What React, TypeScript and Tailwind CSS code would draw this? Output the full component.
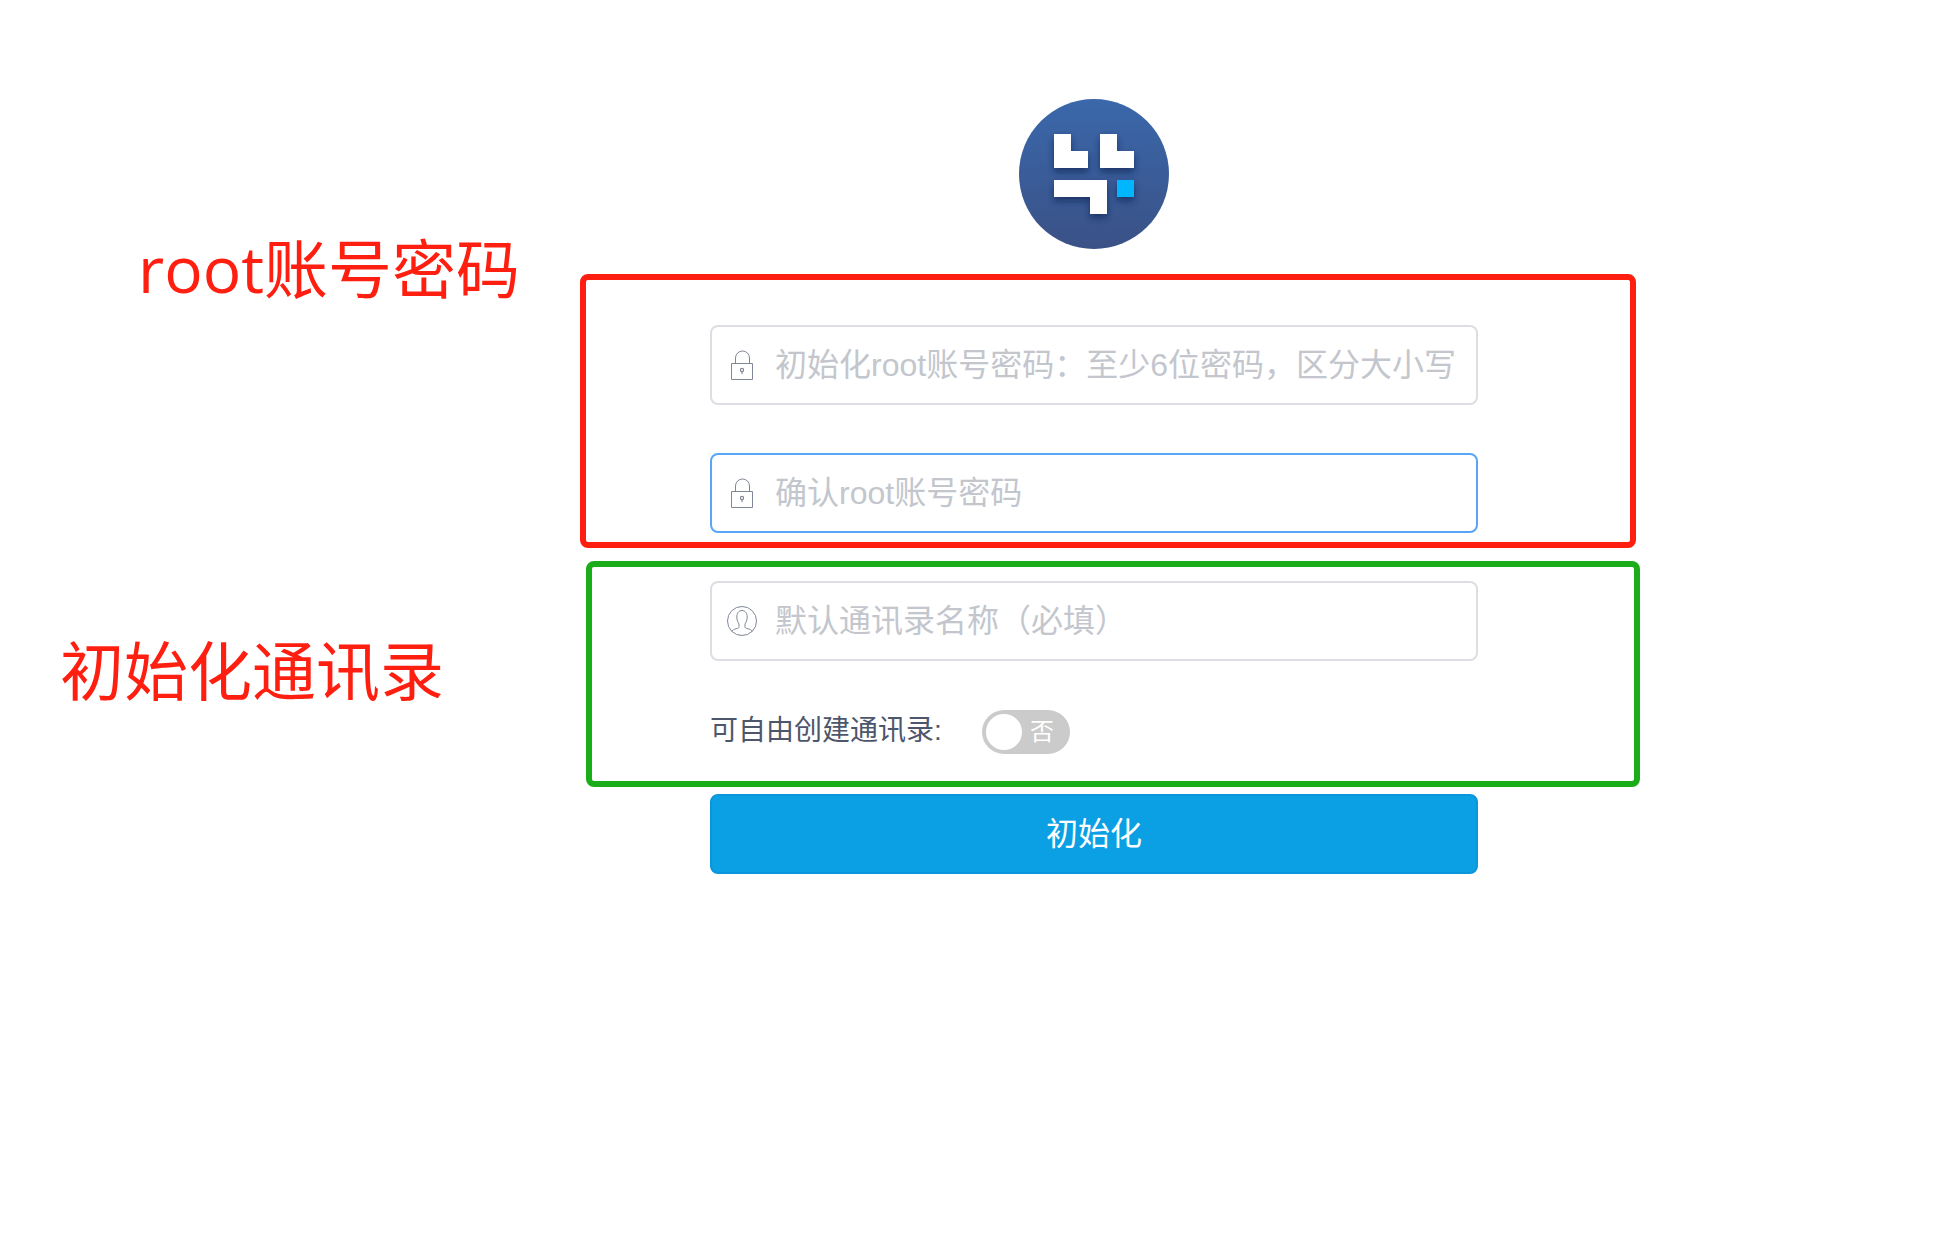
import type { ReactNode } from "react";

function Logo() {
  return (
    <svg viewBox="0 0 150 150" className="h-[150px] w-[150px]" role="img" aria-label="Logo">
      <defs>
        <linearGradient id="disc" x1="0" y1="0" x2="0" y2="1">
          <stop offset="0" stopColor="#3a68ab" />
          <stop offset="1" stopColor="#3a5186" />
        </linearGradient>
        <filter id="shade" x="-20%" y="-20%" width="140%" height="150%">
          <feDropShadow dx="0" dy="4" stdDeviation="3.5" floodColor="#0b2558" floodOpacity="0.75" />
        </filter>
      </defs>
      <circle cx="75" cy="75" r="75" fill="url(#disc)" />
      <g filter="url(#shade)">
        <path d="M35 35h17v17h17v17H35z" fill="#fff" />
        <path d="M81 35h17v17h17v17H81z" fill="#fff" />
        <path d="M35 81h53v34H71V98H35z" fill="#fff" />
        <path d="M98 81h17v17H98z" fill="#00b7ff" />
      </g>
    </svg>
  );
}

function LockIcon() {
  return (
    <svg viewBox="0 0 32 32" className="h-8 w-8" fill="none" stroke="#808798" aria-hidden="true">
      <path d="M5.5 14.5h21v16h-21z" />
      <path d="M9.5 14.5V9a7 7 0 0 1 14 0v5.5" />
      <circle cx="16" cy="21" r="1.6" strokeWidth="1.2" />
      <path d="M16 22.6V25" strokeWidth="1.2" />
    </svg>
  );
}

function PersonIcon() {
  return (
    <svg viewBox="0 0 32 32" className="h-8 w-8" fill="none" stroke="#808798" aria-hidden="true">
      <circle cx="16" cy="16" r="14.5" />
      <path d="M5.6 26.4c1-1.4 2.400-2.200 4.400-2.600 2.300-.4 3-.8 3-2.300v-2.500c-1.300-2-2.200-4.300-2.200-7 0-3.900 2-6.500 5.200-6.500s5.200 2.600 5.200 6.500c0 2.700-.9 5-2.200 7v2.500c0 1.500.7 1.900 3 2.300 2 .4 3.400 1.200 4.400 2.600" />
    </svg>
  );
}

type FieldProps = {
  icon: ReactNode;
  placeholder: string;
  type: "text" | "password";
  active?: boolean;
};

function Field({ icon, placeholder, type, active = false }: FieldProps) {
  return (
    <label
      className={`flex h-20 w-full items-center gap-[17px] rounded-lg border-2 bg-white pl-[14px] pr-3 ${
        active ? "border-[#58a6f5]" : "border-[#dcdee4]"
      }`}
    >
      {icon}
      <input
        type={type}
        aria-label={placeholder}
        placeholder={placeholder}
        className="h-full min-w-0 flex-1 bg-transparent text-[32px] text-[#4d566b] outline-none placeholder:text-[#c3c6cd]"
      />
    </label>
  );
}

export default function App() {
  return (
    <main className="flex min-h-screen bg-white pr-[316px] font-['Liberation_Sans','Noto_Sans_CJK_SC',sans-serif]">
      <aside className="w-[580px] shrink-0 whitespace-nowrap pt-[229px] font-['Open_Sans','Noto_Sans_CJK_SC',sans-serif] text-[64px] leading-[80px] text-[#ff1f10]">
        <p className="pl-[138px]">root账号密码</p>
        <p className="mt-[322px] pl-[60px]">初始化通讯录</p>
      </aside>

      <form className="min-w-0 flex-1 pt-[99px]" onSubmit={(e) => e.preventDefault()}>
        <div className="flex justify-center pl-[130px] pr-[163px]">
          <Logo />
        </div>

        <section className="mr-[5px] mt-[25px] flex flex-col gap-12 rounded-lg border-[6px] border-[#ff1f10] pb-[9px] pl-[124px] pr-[152px] pt-[45px]">
          <Field type="password" icon={<LockIcon />} placeholder="初始化root账号密码：至少6位密码，区分大小写" />
          <Field type="password" icon={<LockIcon />} placeholder="确认root账号密码" active />
        </section>

        <section className="ml-[6px] mr-px mt-[13px] rounded-lg border-[6px] border-[#1aad19] pb-[27px] pl-[118px] pr-[156px] pt-[14px]">
          <Field type="text" icon={<PersonIcon />} placeholder="默认通讯录名称（必填）" />
          <div className="mt-[49px] flex h-11 items-center">
            <label htmlFor="free-create" className="w-[272px] pb-0.5 text-[28px] leading-10 text-[#4d566b]">
              可自由创建通讯录:
            </label>
            <label className="flex h-11 w-[88px] cursor-pointer items-center gap-2 rounded-full bg-[#cbcbcb] pl-1">
              <input id="free-create" type="checkbox" role="switch" className="sr-only" />
              <span className="h-9 w-9 rounded-full bg-white" />
              <span className="text-2xl leading-8 text-white">否</span>
            </label>
          </div>
        </section>

        <div className="mt-[7px] pl-[130px] pr-[163px]">
          <button
            type="submit"
            className="h-20 w-full rounded-lg border-2 border-[#0a96da] bg-[#0b9fe4] text-[32px] text-white"
          >
            初始化
          </button>
        </div>
      </form>
    </main>
  );
}
